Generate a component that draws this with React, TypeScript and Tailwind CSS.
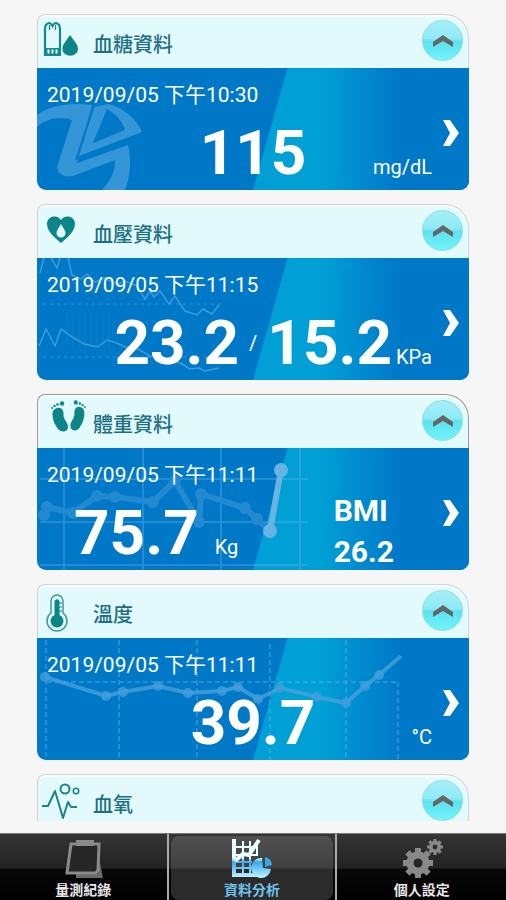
import type { ReactNode } from "react";

type Kind = "glucose" | "pressure" | "weight" | "temperature" | "oxygen";

const FONT = "font-[Roboto,'Noto_Sans_CJK_TC',sans-serif]";

function Foot() {
  return (
    <>
      <path d="M13 10c5-1 7 3 6.500 7 0 5 4.500 7 4.500 12 0 5-7 6-10 2-3-4-5.500-9-5.500-14 0-4 1-6 4.500-7z" />
      <circle cx="18" cy="5.500" r="2.200" />
      <circle cx="13.500" cy="6.500" r="1.300" />
      <circle cx="10.500" cy="8" r="1.200" />
      <circle cx="8" cy="10" r="1" />
    </>
  );
}

function HeaderIcon({ kind }: { kind: Kind }) {
  return (
    <svg viewBox="0 0 40 42" className="h-[42px] w-10 overflow-visible" aria-hidden="true">
      {kind === "glucose" && (
        <>
          <path d="M2 36V10q0-5 4-6 2 0 3.500 3 1.500-3 3.500-3 4 1 4 6v26z" fill="none" stroke="#138a8c" strokeWidth="2.200" />
          <path d="M6.500 6v5M12.500 6v5" stroke="#138a8c" strokeWidth="1.200" />
          <path d="M2 29h15v7H2z" fill="#138a8c" />
          <path d="M4.500 30.500h2v4h-2zM8.500 30.500h2v4h-2zM12.500 30.500h2v4h-2z" fill="#e4fbfb" />
          <path d="M27 16c4 6 8 9 8 14a7.800 6.800 0 0 1-15.600 0c0-5 4-8 7.600-14z" fill="#0b8588" />
        </>
      )}
      {kind === "pressure" && (
        <>
          <path d="M18 34C11 28 4 22 4 15c0-8 10-10 14-4 4-6 14-4 14 4 0 7-7 13-14 19z" fill="#0b8588" />
          <path d="M18 15c3 5 4.500 7 4.500 9a4.500 4.500 0 0 1-9 0c0-2 1.500-4 4.500-9z" fill="#e4fbfb" />
        </>
      )}
      {kind === "weight" && (
        <g fill="#0b8588" transform="translate(1 -1)">
          <Foot />
          <g transform="matrix(-0.900 0 0 1 48 -1)">
            <Foot />
          </g>
        </g>
      )}
      {kind === "temperature" && (
        <g transform="translate(-2 3)">
          <path d="M10 21V9a6 6 0 0 1 12 0v12a10 10 0 1 1-12 0z" fill="none" stroke="#3c9a98" strokeWidth="1.500" />
          <path d="M13.500 23V9a2.700 2.700 0 0 1 5 0v14a6.500 6.500 0 1 1-5 0z" fill="#0b8588" />
          <path d="M18 11h3M18 15h3M18 19h3" stroke="#0b8588" />
        </g>
      )}
      {kind === "oxygen" && (
        <g fill="none" stroke="#17858a" strokeWidth="2">
          <path d="M-1 27h6l7-15 8 27 5-16 3 5h6" strokeLinejoin="round" />
          <circle cx="22" cy="10" r="4.500" />
          <circle cx="33" cy="12" r="2.700" strokeWidth="1.600" />
        </g>
      )}
    </svg>
  );
}

function Dots({ points, r }: { points: number[][]; r: number }) {
  return (
    <>
      {points.map(([x, y]) => (
        <circle key={`${x}-${y}`} cx={x} cy={y} r={r} />
      ))}
    </>
  );
}

const toLine = (points: number[][]) => points.map((p) => p.join(",")).join(" ");

const weightPoints = [[7, 67], [10, 59], [36, 65], [60, 48], [78, 49], [116, 54], [138, 33], [162, 74], [164, 46], [208, 60], [220, 71], [233, 83], [244, 22]];
const tempPoints = [[8, 39], [69, 58], [86, 54], [121, 48], [151, 55], [185, 53], [201, 49], [221, 61], [243, 50], [280, 59], [309, 65], [328, 48], [342, 37], [364, 18]];

function Watermark({ kind }: { kind: Kind }) {
  return (
    <svg viewBox="0 0 432 122" preserveAspectRatio="xMinYMin slice" className="absolute inset-0 h-full w-full" aria-hidden="true">
      {kind === "glucose" && (
        <g fill="#3496d6">
          <path d="M0 59V47C12 37 35 34 55 37L40 95 91 77C95 94 93 109 88 122H65C74 112 79 102 78 92L36 108C26 110 18 104 21 96L35 52C22 48 10 50 0 59z" />
          <path d="M57 39 42 88 105 64C99 50 87 40 71 36zm13 2c9 5 15 12 18 21L56 75z" fillRule="evenodd" />
          <path d="M57 37 39 92" stroke="#0078c8" strokeWidth="2" />
        </g>
      )}
      {kind === "pressure" && (
        <g fill="none" stroke="#62b5e5" strokeOpacity="0.600" strokeWidth="1.500">
          <path d="M3 15 7 0M14 0l6 10 3-10M31 0l4 17 9 4 6-5 8 8 10-4 12 7 8-4 12 5 8 13 5-8 4 6 6-6 9 13 6-8 10 15 12 4 6-6 9 5 7-9" />
          <path d="m2 88 7-17 9 17 6-17 8 6 15 9 14 3 9-7 10 3 8 4 13 2 12 7 15 3 15 4 10 6 9-1 6 3 14-3" />
          <path d="M6 46h178M6 99h178" strokeDasharray="3 4" strokeOpacity="0.350" />
          <path d="M30 55v32M36 55v32M42 55v34M48 55v34M54 55v34M60 55v34M66 55v34M72 55v34" strokeOpacity="0.150" strokeWidth="1" />
        </g>
      )}
      {kind === "weight" && (
        <g stroke="#6db5e2" fill="none">
          <path d="M27 0v122M106 0v122M184 0v122M263 0v122M3 31h268M3 74h268M3 117h268" strokeWidth="1.500" strokeOpacity="0.450" />
          <polyline points={toLine(weightPoints.slice(0, 12))} strokeWidth="6" stroke="#2389d0" strokeLinejoin="round" />
          <g fill="#2389d0" stroke="none"><Dots points={weightPoints.slice(0, 11)} r={6} /></g>
          <path d="m233 83 11-61" strokeWidth="6" stroke="#67b4e3" />
          <g fill="#67b4e3" stroke="none"><Dots points={weightPoints.slice(11)} r={7} /></g>
        </g>
      )}
      {kind === "temperature" && (
        <g fill="none">
          <path d="M9 2v120M82 2v120M160 2v120M233 6v116M309 2v120M361 44v78M10 44h351" stroke="#72bae4" strokeOpacity="0.450" strokeWidth="1.500" strokeDasharray="5 3" />
          <polyline points={toLine(tempPoints)} stroke="#4ba3dc" strokeOpacity="0.750" strokeWidth="4" />
          <g fill="#429edb" fillOpacity="0.800"><Dots points={tempPoints.slice(0, -1)} r={5} /></g>
        </g>
      )}
    </svg>
  );
}

interface CardProps {
  kind: Kind;
  title: string;
  date?: string;
  dark?: boolean;
  children?: ReactNode;
}

function Card({ kind, title, date, dark, children }: CardProps) {
  return (
    <section className="shrink-0">
      <header
        className={`flex h-[54px] items-start rounded-tl-lg rounded-tr-3xl border-t border-r border-l bg-[#e2fafb] px-[5px] shadow-[inset_0_2px_1px_#f8ffff] ${
          dark ? "border-[#999]" : "border-[#d2d4d4]"
        }`}
      >
        <div className="pt-1">
          <HeaderIcon kind={kind} />
        </div>
        <h2 className="ml-[10px] flex-1 pt-[15px] text-xl leading-[30px] font-medium text-[#1c6f84]">{title}</h2>
        <button
          type="button"
          aria-label={`收合${title}`}
          className="mt-[5px] flex size-[41px] items-center justify-center rounded-full border border-[#8edde3] bg-[linear-gradient(#a5eff7_0%,#8eeaf5_45%,#5ee2ef_52%,#6ff4fa_100%)]"
        >
          <svg viewBox="0 0 24 14" className="h-[14px] w-6" aria-hidden="true">
            <path d="M2 8 12 1l10 7v5L12 7 2 13z" fill="#666" />
          </svg>
        </button>
      </header>
      {date && (
        <a href={`#${kind}`} className="relative flex h-[122px] overflow-hidden rounded-b-[9px] bg-[#0078c8] text-white">
          <div className="absolute inset-0 bg-[linear-gradient(90deg,#009fd6_0%,#009fd6_66%,#0078c8_84%)] [clip-path:polygon(58%_0,100%_0,100%_100%,50%_100%)]" />
          <Watermark kind={kind} />
          <div className="relative flex flex-1 flex-col pl-[10px]">
            <time className="pt-3 text-[21px] leading-[30px]">{date}</time>
            <div className="flex-1 pl-[27px]">{children}</div>
          </div>
          <div className="relative flex w-[37px] items-center justify-center pt-2">
            <svg viewBox="0 0 18 28" className="h-7 w-[18px]" aria-hidden="true">
              <path d="M1 1h7l9 13-9 13H1l7-13z" fill="#fff" />
            </svg>
          </div>
        </a>
      )}
    </section>
  );
}

function Value({ children }: { children: ReactNode }) {
  return <strong className="text-[62px] leading-[86px] font-bold">{children}</strong>;
}

function CenteredReading({ value, unit }: { value: string; unit: string }) {
  return (
    <div className="grid grid-cols-[1fr_auto_1fr] items-baseline">
      <span />
      <Value>{value}</Value>
      <span className="text-right text-xl">{unit}</span>
    </div>
  );
}

function RecordsIcon() {
  return (
    <svg viewBox="0 0 42 42" className="size-[42px]" aria-hidden="true">
      <path d="M37 20 41 40H14v-4h22z" fill="#6a6a6a" />
      <path d="M9 6h28l-1 26-2 3H5z" fill="#262626" stroke="#8a8a8a" strokeWidth="3" />
      <path d="M14 2h18v6H14z" fill="#8a8a8a" />
    </svg>
  );
}

function AnalysisIcon() {
  return (
    <svg viewBox="0 0 42 42" className="size-[42px]" aria-hidden="true">
      <defs>
        <linearGradient id="ice" gradientUnits="userSpaceOnUse" x1="0" y1="0" x2="0" y2="40">
          <stop offset="0.500" stopColor="#eaffff" />
          <stop offset="0.600" stopColor="#35a9ee" />
          <stop offset="1" stopColor="#c4f6ff" />
        </linearGradient>
      </defs>
      <path d="M1 1h4v34h22v4H1z" fill="url(#ice)" />
      <path d="M11 3h2v33h-2zM18 3h2v33h-2zM25 3h2v15h-2zM5 8h22v2H5zM5 16h22v2H5zM5 23h16v2H5zM5 29h14v2H5z" fill="url(#ice)" />
      <path d="m4 23 8-7 6 1 10-15" fill="none" stroke="#eaffff" strokeWidth="4" />
      <path d="M31 20a10 10 0 1 0 9 11l-8-1z" fill="url(#ice)" />
      <path d="M34 19q6 1 7 8l-7 2z" fill="#35a9e8" />
    </svg>
  );
}

function Gear({ cx, cy, r }: { cx: number; cy: number; r: number }) {
  return (
    <g transform={`translate(${cx} ${cy}) scale(${r / 15})`}>
      {[0, 45, 90, 135].map((angle) => (
        <path key={angle} d="M-3-15h6v9h-6zM-3 6h6v9h-6z" transform={`rotate(${angle})`} fill="#888" />
      ))}
      <circle r="8" fill="none" stroke="#888" strokeWidth="7" />
    </g>
  );
}

function SettingsIcon() {
  return (
    <svg viewBox="0 0 42 42" className="size-[42px]" aria-hidden="true">
      <Gear cx={17} cy={25} r={15} />
      <Gear cx={34} cy={9} r={8} />
    </svg>
  );
}

const tabs = [
  { label: "量測紀錄", icon: <RecordsIcon />, active: false },
  { label: "資料分析", icon: <AnalysisIcon />, active: true },
  { label: "個人設定", icon: <SettingsIcon />, active: false },
];

export default function App() {
  return (
    <div className={`flex h-screen flex-col bg-[#f6f6f6] ${FONT}`}>
      <main className="mb-3 flex min-h-0 flex-1 flex-col gap-[14px] overflow-hidden px-[37px] pt-[14px]">
        <Card kind="glucose" title="血糖資料" date="2019/09/05 下午10:30">
          <CenteredReading value="115" unit="mg/dL" />
        </Card>
        <Card kind="pressure" title="血壓資料" date="2019/09/05 下午11:15">
          <div className="flex items-baseline justify-end">
            <Value>23.2</Value>
            <span className="self-center px-[10px] text-xl">/</span>
            <Value>15.2</Value>
            <span className="ml-1 text-xl">KPa</span>
          </div>
        </Card>
        <Card kind="weight" title="體重資料" date="2019/09/05 下午11:11" dark>
          <div className="flex items-baseline">
            <Value>75.7</Value>
            <span className="ml-4 text-xl">Kg</span>
            <dl className="ml-auto self-start pr-[38px] text-[30px] leading-[41px] font-bold">
              <dt>BMI</dt>
              <dd>26.2</dd>
            </dl>
          </div>
        </Card>
        <Card kind="temperature" title="溫度" date="2019/09/05 下午11:11">
          <CenteredReading value="39.7" unit="°C" />
        </Card>
        <Card kind="oxygen" title="血氧" />
      </main>
      <nav className="grid h-[67px] shrink-0 grid-cols-3 divide-x-2 divide-[#aaa] border-t border-[#777] bg-black">
        {tabs.map((tab) => (
          <button
            key={tab.label}
            type="button"
            className="bg-[linear-gradient(#353535_0%,#222_50%,#080808_52%,#000_100%)] p-[2px]"
          >
            <span
              className={`flex h-full flex-col items-center rounded-lg pt-[2px] text-sm leading-5 font-bold ${
                tab.active ? "bg-[linear-gradient(#505050_0%,#404040_50%,#2b2b2b_52%,#2b2b2b_100%)] text-[#6fc4ee]" : "text-[#e8e8e8]"
              }`}
            >
              {tab.icon}
              {tab.label}
            </span>
          </button>
        ))}
      </nav>
    </div>
  );
}
